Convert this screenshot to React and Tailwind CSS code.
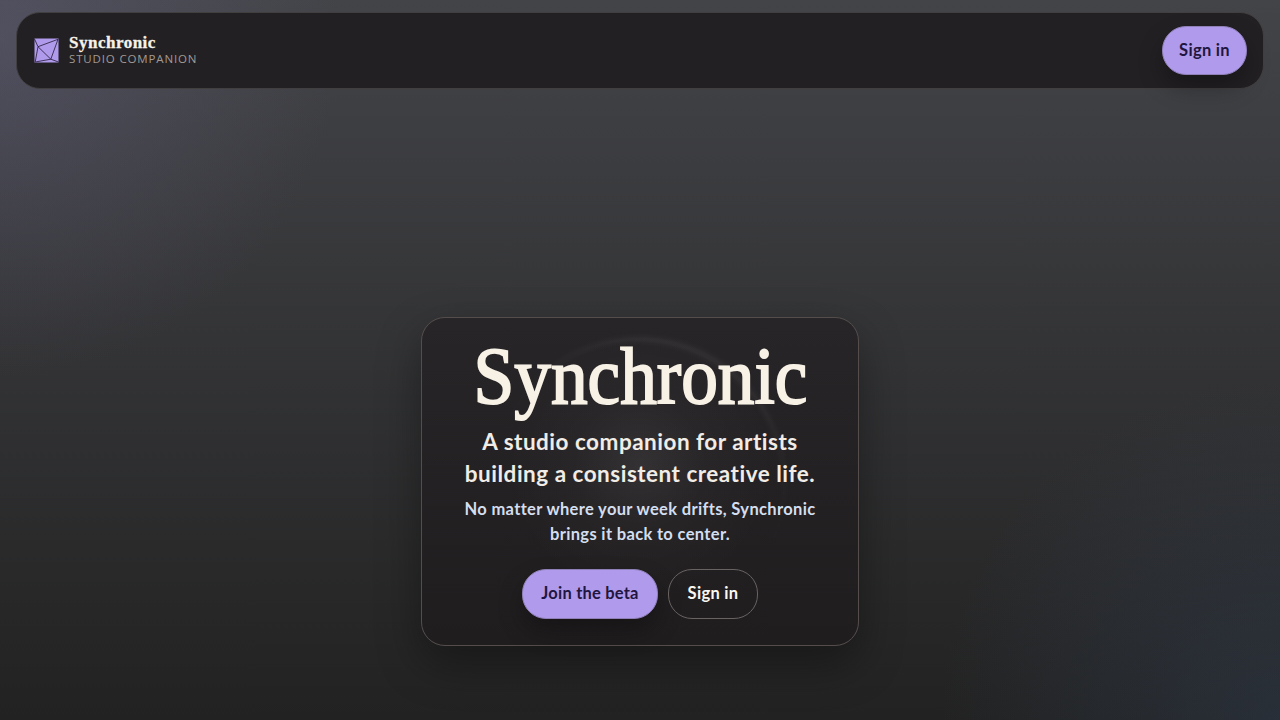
import React from "react";

const Logo = () => {
  return (
    <svg className="size-[25px] shrink-0" viewBox="0 0 25 25">
      <rect x="0.5" y="0.5" width="24" height="24" fill="#b09aec" />
      <g fill="none" stroke="#2b2140" strokeWidth="0.85" strokeLinejoin="round">
        <path d="M0.500 1 4 8.700 24 1.300 16.800 21.200 4 8.700 1.200 24 16.800 21.200 24.500 24" />
      </g>
    </svg>
  );
};

const Header = () => {
  return (
    <header className="mx-4 flex h-[77px] items-center justify-between rounded-3xl border border-[#423f41] bg-[#232023] pr-4 pl-[17px]">
      <div className="flex items-center gap-[10px]">
        <Logo />
        <div className="flex flex-col">
          <span className="font-['Liberation_Serif',serif] text-[17px] leading-[17px] font-bold tracking-[0.5px] text-[#f8f2e6] [-webkit-text-stroke:0.3px_#f8f2e6]">
            Synchronic
          </span>
          <span className="font-['Open_Sans',sans-serif] text-[11.500px] leading-4 tracking-[0.85px] text-[#a19a94]">
            STUDIO COMPANION
          </span>
        </div>
      </div>
      <button className="h-[49px] w-[85px] rounded-3xl border border-[#8f80b8] bg-[#b09aec] pb-px text-[16.500px] font-bold tracking-[0.3px] text-[#21163f] shadow-[0_12px_24px_rgba(0,0,0,0.3)]">
        Sign in
      </button>
    </header>
  );
};

const Hero = () => {
  return (
    <section className="relative mx-auto mt-[228px] flex h-[329px] w-[438px] flex-col items-center rounded-3xl border border-[#544d4b] bg-linear-to-b from-[#282528] to-[#201d1f] text-center shadow-[0_18px_44px_rgba(0,0,0,0.35)]">
      {/* faint glass orb behind the title */}
      <div className="absolute top-[19px] left-[73px] size-[290px] rounded-full bg-[radial-gradient(circle_at_50%_44%,rgba(255,255,255,0.07),rgba(255,255,255,0.02)_30%,transparent_62%)]" />
      <div className="absolute top-[19px] left-[73px] size-[290px] rotate-[25deg] rounded-full border-t-[5px] border-white/6 blur-[2px]" />
      <h1 className="relative mt-[13px] h-[91px] origin-center scale-x-[0.905] font-['Liberation_Serif',serif] text-[81px] leading-[91px] whitespace-nowrap text-[#f8f2e6] [-webkit-text-stroke:2px_#f8f2e6]">
        Synchronic
      </h1>
      <p className="relative mt-[4px] text-[22.500px] leading-8 font-bold tracking-[0.5px] whitespace-nowrap text-[#f1ece6]">
        A studio companion for artists
        <br />
        building a consistent creative life.
      </p>
      <p className="relative mt-[7px] text-[16.500px] leading-[25px] font-bold tracking-[0.340px] whitespace-nowrap text-[#d3def0]">
        No matter where your week drifts, Synchronic
        <br />
        brings it back to center.
      </p>
      <div className="relative mt-[22px] flex gap-[10px]">
        <button className="h-[50px] w-[136px] rounded-3xl border border-[#8f80b8] bg-[#b09aec] pb-px text-[16.500px] font-bold tracking-[0.2px] text-[#21163f] shadow-[0_12px_24px_rgba(0,0,0,0.3)]">
          Join the beta
        </button>
        <button className="h-[50px] w-[90px] rounded-3xl border border-[#686262] pb-px text-[16.500px] font-bold tracking-[0.3px] text-[#faf7f2]">
          Sign in
        </button>
      </div>
    </section>
  );
};

const App = () => {
  return (
    <div className="h-screen overflow-hidden bg-[radial-gradient(circle_at_0%_5%,rgba(120,115,160,0.28),transparent_340px),radial-gradient(circle_at_100%_100%,rgba(60,85,120,0.25),transparent_340px),linear-gradient(180deg,#434448,#222222)] pt-3 font-[Lato,sans-serif]">
      <Header />
      <Hero />
    </div>
  );
};

export default App;
